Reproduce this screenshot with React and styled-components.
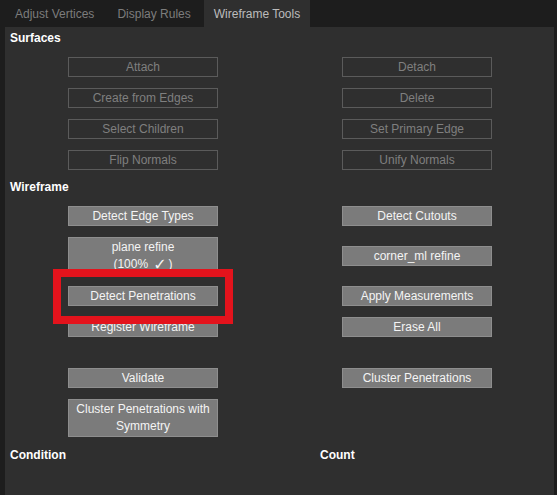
import React from 'react'
import styled, { createGlobalStyle } from 'styled-components'

const GlobalStyle = createGlobalStyle`
  html, body {
    margin: 0;
    padding: 0;
    background: #1d1d1d;
    font-family: "Liberation Sans", Arial, sans-serif;
  }
`

const Page = styled.div`
  width: 557px;
  height: 495px;
  box-sizing: border-box;
  padding: 0 3px 0 5px;
  display: flex;
  flex-direction: column;
  background: #1d1d1d;
  overflow: hidden;
`

const TabBar = styled.div`
  display: flex;
  gap: 3px;
  height: 27px;
`

const Tab = styled.div`
  height: 27px;
  padding: 0 10px;
  display: flex;
  align-items: center;
  font-size: 12px;
  color: ${(props) => (props.$active ? '#bcbcbc' : '#7c7c7c')};
  background: ${(props) => (props.$active ? '#2f2f2f' : 'transparent')};
`

const Panel = styled.div`
  flex: 1;
  background: #2f2f2f;
  padding-top: 4px;
`

const Heading = styled.div`
  font-size: 12px;
  line-height: 14px;
  font-weight: bold;
  color: #ffffff;
  padding-left: 5px;
  margin-bottom: ${(props) => props.$after || 12}px;
`

const Grid = styled.div`
  display: grid;
  grid-template-columns: 1fr 1fr;
  row-gap: 11px;
  justify-items: center;
  align-items: center;
  padding-left: 1px;
  margin-top: ${(props) => props.$top || 0}px;
  margin-bottom: ${(props) => props.$bottom || 0}px;
`

const Button = styled.button`
  width: 150px;
  box-sizing: border-box;
  margin: 0;
  padding: 1px 4px;
  font-family: inherit;
  font-size: 12px;
  line-height: ${(props) => (props.$lines === 2 ? 17 : 16)}px;
  text-align: center;
  border: 1px solid ${(props) => (props.disabled ? '#5b5b5b' : '#8e8e8e')};
  background: ${(props) => (props.disabled ? 'transparent' : '#7b7b7b')};
  color: ${(props) => (props.disabled ? '#7f7f7f' : '#f4f4f4')};
`

const Check = styled.span`
  display: inline-block;
  height: 17px;
  line-height: 17px;
  vertical-align: top;
  font-family: "DejaVu Sans", sans-serif;
  font-size: 16px;
  margin: 0 2px 0 5px;
`

const Marked = styled.div`
  position: relative;
`

const Highlight = styled.div`
  position: absolute;
  left: -15px;
  right: -15px;
  top: -17px;
  bottom: -18px;
  border: 8px solid #e3131c;
  pointer-events: none;
`

const Footer = styled.div`
  display: grid;
  grid-template-columns: 310px 1fr;
  font-size: 12px;
  line-height: 14px;
  font-weight: bold;
  color: #ffffff;
  padding-left: 5px;
`

const App = () => {
  return (
    <Page>
      <GlobalStyle />
      <TabBar>
        <Tab>Adjust Vertices</Tab>
        <Tab>Display Rules</Tab>
        <Tab $active>Wireframe Tools</Tab>
      </TabBar>
      <Panel>
        <Heading>Surfaces</Heading>
        <Grid $bottom={10}>
          <Button disabled>Attach</Button>
          <Button disabled>Detach</Button>
          <Button disabled>Create from Edges</Button>
          <Button disabled>Delete</Button>
          <Button disabled>Select Children</Button>
          <Button disabled>Set Primary Edge</Button>
          <Button disabled>Flip Normals</Button>
          <Button disabled>Unify Normals</Button>
        </Grid>
        <Heading>Wireframe</Heading>
        <Grid>
          <Button>Detect Edge Types</Button>
          <Button>Detect Cutouts</Button>
          <Button $lines={2}>plane refine<br />(100%<Check>✓</Check>)</Button>
          <Button>corner_ml refine</Button>
          <Marked>
            <Button>Detect Penetrations</Button>
            <Highlight />
          </Marked>
          <Button>Apply Measurements</Button>
          <Button>Register Wireframe</Button>
          <Button>Erase All</Button>
        </Grid>
        <Grid $top={31} $bottom={11}>
          <Button>Validate</Button>
          <Button>Cluster Penetrations</Button>
          <Button $lines={2}>Cluster Penetrations with Symmetry</Button>
          <div />
        </Grid>
        <Footer>
          <span>Condition</span>
          <span>Count</span>
        </Footer>
      </Panel>
    </Page>
  )
}

export default App
